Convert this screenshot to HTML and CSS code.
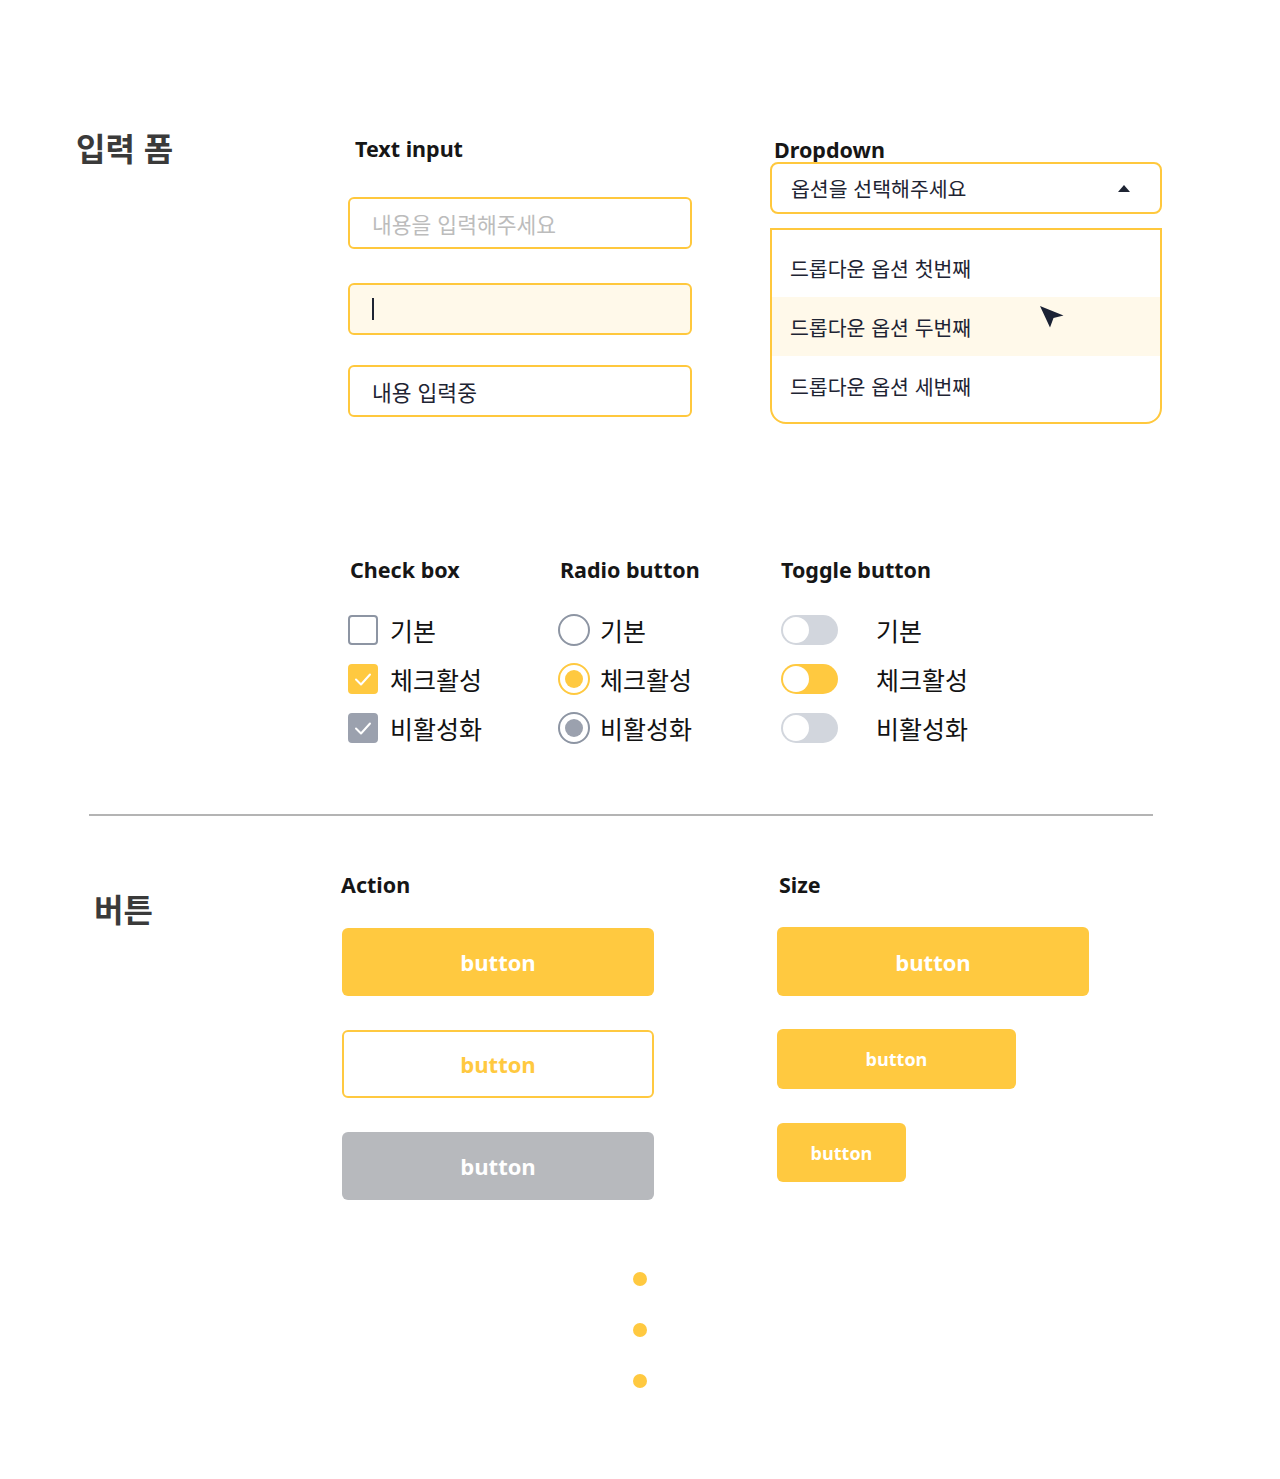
FILE: index.html
```html
<!DOCTYPE html>
<html lang="ko">
<head>
<meta charset="utf-8">
<title>UI Components</title>
<link rel="stylesheet" href="styles.css">
</head>
<body>
<main class="page">
  <section class="form-section">
    <h1 class="section-title">입력 폼</h1>

    <div class="col col-text">
      <h2 class="label">Text input</h2>
      <div class="input input-empty">내용을 입력해주세요</div>
      <div class="input input-focus"><span class="caret"></span></div>
      <div class="input input-filled">내용 입력중</div>
    </div>

    <div class="col col-drop">
      <h2 class="label label-drop">Dropdown</h2>
      <div class="select">
        <span>옵션을 선택해주세요</span>
        <svg class="tri" width="12" height="7" viewBox="0 0 12 7"><polygon points="6,0 12,7 0,7" fill="#1e2433"/></svg>
      </div>
      <ul class="options">
        <li class="option">드롭다운 옵션 첫번째</li>
        <li class="option option-hover">드롭다운 옵션 두번째
          <svg class="pointer" width="24" height="22" viewBox="0 0 24 22"><polygon points="0,0 23.5,9.5 13.5,12 10,21.5" fill="#1b2234"/></svg>
        </li>
        <li class="option">드롭다운 옵션 세번째</li>
      </ul>
    </div>

    <div class="controls">
      <div class="ctrl-col ctrl-check">
        <h2 class="label">Check box</h2>
        <div class="ctrl-row"><span class="checkbox"></span><span class="ctrl-text">기본</span></div>
        <div class="ctrl-row"><span class="checkbox checkbox-on"><svg width="30" height="30" viewBox="0 0 30 30"><polyline points="8,15.5 13,20.5 22,10.5" fill="none" stroke="#fff" stroke-width="2" stroke-linecap="round" stroke-linejoin="round"/></svg></span><span class="ctrl-text">체크활성</span></div>
        <div class="ctrl-row"><span class="checkbox checkbox-off"><svg width="30" height="30" viewBox="0 0 30 30"><polyline points="8,15.5 13,20.5 22,10.5" fill="none" stroke="#fff" stroke-width="2" stroke-linecap="round" stroke-linejoin="round"/></svg></span><span class="ctrl-text">비활성화</span></div>
      </div>
      <div class="ctrl-col ctrl-radio">
        <h2 class="label">Radio button</h2>
        <div class="ctrl-row"><span class="radio"></span><span class="ctrl-text">기본</span></div>
        <div class="ctrl-row"><span class="radio radio-on"><span class="dot"></span></span><span class="ctrl-text">체크활성</span></div>
        <div class="ctrl-row"><span class="radio radio-off"><span class="dot"></span></span><span class="ctrl-text">비활성화</span></div>
      </div>
      <div class="ctrl-col ctrl-toggle">
        <h2 class="label">Toggle button</h2>
        <div class="ctrl-row"><span class="toggle"><span class="knob"></span></span><span class="ctrl-text">기본</span></div>
        <div class="ctrl-row"><span class="toggle toggle-on"><span class="knob"></span></span><span class="ctrl-text">체크활성</span></div>
        <div class="ctrl-row"><span class="toggle"><span class="knob"></span></span><span class="ctrl-text">비활성화</span></div>
      </div>
    </div>
  </section>

  <hr class="divider">

  <section class="button-section">
    <h1 class="section-title title-btn">버튼</h1>
    <div class="col col-action">
      <h2 class="label">Action</h2>
      <div class="btn btn-primary">button</div>
      <div class="btn btn-outline">button</div>
      <div class="btn btn-disabled">button</div>
    </div>
    <div class="col col-size">
      <h2 class="label">Size</h2>
      <div class="btn btn-primary">button</div>
      <div class="btn btn-primary btn-md">button</div>
      <div class="btn btn-primary btn-sm">button</div>
    </div>
  </section>

  <div class="dots">
    <span></span><span></span><span></span>
  </div>
</main>
</body>
</html>
```

FILE: styles.css
```css
* { box-sizing: border-box; }

body {
  margin: 0;
  background: #ffffff;
  font-family: "Noto Sans", "Noto Sans CJK KR", sans-serif;
  color: #1e2433;
}

.page {
  width: 1280px;
  height: 1479px;
}

h1, h2, ul { margin: 0; padding: 0; }

.section-title {
  font-family: "Noto Sans CJK KR", sans-serif;
  font-size: 32px;
  line-height: 40px;
  font-weight: 700;
  color: #3a3a3a;
}

.label {
  font-family: "Noto Sans", "Noto Sans CJK KR", sans-serif;
  font-size: 21.5px;
  line-height: 24px;
  font-weight: 700;
  color: #161616;
}

/* ---------- form section ---------- */
.form-section {
  display: grid;
  grid-template-columns: 272px 422px 392px;
  padding: 127px 0 0 76px;
}

.col { display: flex; flex-direction: column; align-items: flex-start; }

.col-text { padding-top: 10px; }
.col-text .label { margin-left: 7px; }

.input {
  width: 344px;
  height: 52px;
  border: 2px solid #ffc83d;
  border-radius: 6px;
  padding-left: 22px;
  display: flex;
  align-items: center;
  font-family: "Noto Sans CJK KR", sans-serif;
  font-size: 21.5px;
  color: #1e2433;
}
.input-empty { margin-top: 36px; color: #bcbcbc; }
.input-focus { margin-top: 34px; background: #fff9ea; }
.input-filled { margin-top: 30px; }

.caret {
  display: block;
  width: 2px;
  height: 22px;
  background: #1e2433;
}

.col-drop { padding-top: 11px; }
.label-drop { margin-left: 4px; }

.select {
  width: 392px;
  height: 52px;
  border: 2px solid #ffc83d;
  border-radius: 8px;
  padding: 0 30px 0 19px;
  display: flex;
  align-items: center;
  justify-content: space-between;
  font-family: "Noto Sans CJK KR", sans-serif;
  font-size: 20.5px;
  color: #1e2433;
}
.tri { margin-top: 1px; }

.options {
  list-style: none;
  width: 392px;
  margin-top: 14px;
  border: 2px solid #ffc83d;
  border-radius: 0 0 16px 16px;
  padding: 8px 0 7px;
}
.option {
  position: relative;
  height: 59px;
  display: flex;
  align-items: center;
  padding-left: 18px;
  font-family: "Noto Sans CJK KR", sans-serif;
  font-size: 20.5px;
  color: #1e2433;
}
.option-hover { background: #fff9ea; }
.pointer {
  position: absolute;
  left: 268px;
  top: 9px;
}

/* ---------- controls ---------- */
.controls {
  grid-column: 2 / 4;
  display: flex;
  margin-top: 134px;
}
.ctrl-col { display: flex; flex-direction: column; }
.ctrl-check { width: 210px; }
.ctrl-radio { width: 223px; }
.ctrl-check .label { margin-left: 2px; }
.ctrl-radio .label { margin-left: 2px; }

.ctrl-col .label { margin-bottom: 23px; }

.ctrl-row {
  height: 49px;
  display: flex;
  align-items: center;
}
.ctrl-text {
  font-family: "Noto Sans CJK KR", sans-serif;
  font-size: 25px;
  color: #121212;
}

.checkbox {
  width: 30px;
  height: 30px;
  border: 2px solid #8d95a3;
  border-radius: 4px;
  margin-right: 12px;
  position: relative;
  display: block;
}
.checkbox svg { position: absolute; left: -2px; top: -2px; }
.checkbox-on { background: #ffc940; border-color: #ffc940; }
.checkbox-off { background: #9ba1ae; border-color: #9ba1ae; }

.radio {
  width: 32px;
  height: 32px;
  border: 2px solid #8d95a3;
  border-radius: 50%;
  margin-right: 10px;
  display: flex;
  align-items: center;
  justify-content: center;
}
.radio .dot {
  width: 18px;
  height: 18px;
  border-radius: 50%;
}
.radio-on { border-color: #ffc940; }
.radio-on .dot { background: #ffc940; }
.radio-off .dot { background: #9ba1ae; }

.toggle {
  width: 57px;
  height: 30px;
  border-radius: 15px;
  background: #d2d6dd;
  padding: 2px;
  margin-right: 38px;
  display: flex;
  align-items: center;
}
.toggle-on { background: #ffc940; }
.knob {
  width: 26px;
  height: 26px;
  border-radius: 50%;
  background: #ffffff;
}

/* ---------- divider ---------- */
.divider {
  width: 1064px;
  margin: 62px 0 0 89px;
  border: 0;
  height: 2px;
  background: #b4b4b4;
}

/* ---------- buttons ---------- */
.button-section {
  display: grid;
  grid-template-columns: 248px 435px 312px;
  padding: 57px 0 0 94px;
}
.title-btn { margin-top: 15px; }

.btn {
  width: 312px;
  height: 68px;
  border-radius: 6px;
  display: flex;
  align-items: center;
  justify-content: center;
  font-family: "Open Sans", "Noto Sans", sans-serif;
  font-weight: 700;
  font-size: 22px;
  color: #ffffff;
}
.btn-primary { background: #ffc940; }
.btn-outline { background: #ffffff; border: 2px solid #ffc940; color: #ffc940; }
.btn-disabled { background: #b7b9bd; }

.col-action .label { margin-left: -1px; }
.col-action .btn { margin-top: 34px; }
.col-action .btn:first-of-type { margin-top: 31px; }

.col-size .label { margin-left: 2px; }
.col-size .btn:first-of-type { margin-top: 30px; height: 69px; }
.btn-md { width: 239px; height: 60px; font-size: 18px; margin-top: 33px; }
.btn-sm { width: 129px; height: 59px; font-size: 18px; margin-top: 34px; }

.dots {
  display: flex;
  flex-direction: column;
  align-items: center;
  gap: 37px;
  margin-top: 72px;
}
.dots span {
  display: block;
  width: 14px;
  height: 14px;
  border-radius: 50%;
  background: #ffc940;
}
```
